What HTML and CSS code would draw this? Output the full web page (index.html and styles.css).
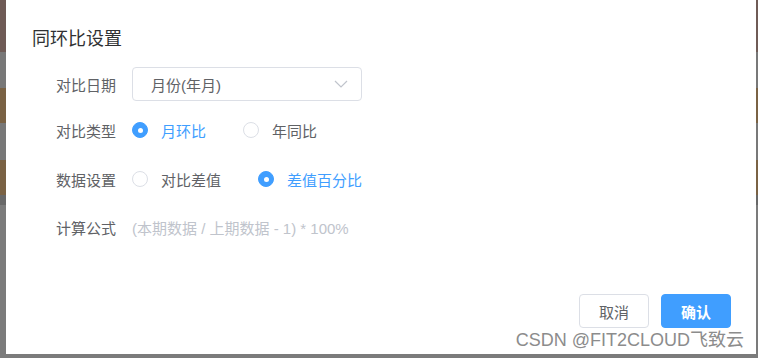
FILE: index.html
```html
<!DOCTYPE html>
<html lang="zh-CN">
<head>
<meta charset="utf-8">
<title>同环比设置</title>
<link rel="stylesheet" href="styles.css">
</head>
<body>
<div class="dialog">
  <div class="title">同环比设置</div>
  <div class="form">
    <div class="row">
      <div class="label">对比日期</div>
      <div class="select">
        <span class="select-text">月份(年月)</span>
        <svg class="arrow" width="14" height="8" viewBox="0 0 14 8"><path d="M1 1 L7 7 L13 1" fill="none" stroke="#c0c4cc" stroke-width="1.2"/></svg>
      </div>
    </div>
    <div class="row row-type">
      <div class="label">对比类型</div>
      <div class="radios">
        <label class="radio checked"><span class="dot"></span><span class="rtext">月环比</span></label>
        <label class="radio"><span class="dot"></span><span class="rtext">年同比</span></label>
      </div>
    </div>
    <div class="row">
      <div class="label">数据设置</div>
      <div class="radios">
        <label class="radio"><span class="dot"></span><span class="rtext">对比差值</span></label>
        <label class="radio checked"><span class="dot"></span><span class="rtext">差值百分比</span></label>
      </div>
    </div>
    <div class="row">
      <div class="label">计算公式</div>
      <div class="formula">(本期数据 / 上期数据 - 1) * 100%</div>
    </div>
  </div>
  <div class="footer">
    <button class="btn">取消</button>
    <button class="btn primary">确认</button>
  </div>
  <div class="watermark">CSDN @FIT2CLOUD飞致云</div>
</div>
</body>
</html>
```

FILE: styles.css
```css
html, body {
  margin: 0;
  padding: 0;
}
body {
  width: 758px;
  height: 358px;
  box-sizing: border-box;
  padding: 0 2px 4px 6px;
  display: flex;
  overflow: hidden;
  font-family: "Liberation Sans", "Noto Sans CJK SC", sans-serif;
  background: linear-gradient(to bottom,
    #6f5b56 0, #6f5b56 52px,
    #787878 52px, #787878 88px,
    #7a6244 88px, #7a6244 123px,
    #787878 123px, #787878 160px,
    #7a6244 160px, #7a6244 195px,
    #686868 195px, #686868 205px,
    #7b7b7b 205px);
}
.dialog {
  position: relative;
  flex: 1;
  background: #fff;
  display: flex;
  flex-direction: column;
  padding: 27px 25px 26px 26px;
}
.title {
  font-size: 18px;
  line-height: 24px;
  color: #303133;
}
.form {
  margin-top: 16px;
  display: flex;
  flex-direction: column;
  gap: 14px;
}
.row {
  display: flex;
  align-items: center;
  height: 34px;
}
.row-type {
  margin-top: -2px;
  margin-bottom: 1px;
}
.label {
  width: 100px;
  padding-right: 16px;
  box-sizing: border-box;
  text-align: right;
  font-size: 15px;
  color: #606266;
}
.select {
  width: 230px;
  height: 34px;
  box-sizing: border-box;
  border: 1px solid #dcdfe6;
  border-radius: 4px;
  display: flex;
  align-items: center;
  justify-content: space-between;
  padding: 0 13px 0 18px;
}
.select-text {
  font-size: 15px;
  color: #606266;
}
.radios {
  display: flex;
  align-items: center;
}
.radio {
  display: flex;
  align-items: center;
  margin-right: 37px;
  font-size: 15px;
  color: #606266;
}
.dot {
  width: 16px;
  height: 16px;
  box-sizing: border-box;
  border: 1px solid #dcdfe6;
  border-radius: 50%;
  background: #fff;
  display: flex;
  align-items: center;
  justify-content: center;
  margin-right: 13px;
}
.radio.checked .dot {
  background: #409eff;
  border-color: #409eff;
}
.radio.checked .dot::after {
  content: "";
  width: 5px;
  height: 5px;
  border-radius: 50%;
  background: #fff;
}
.radio.checked .rtext {
  color: #409eff;
}
.formula {
  font-size: 15px;
  color: #c0c4cc;
}
.footer {
  margin-top: auto;
  display: flex;
  justify-content: flex-end;
  gap: 12px;
}
.btn {
  width: 70px;
  height: 34px;
  border: 1px solid #dcdfe6;
  border-radius: 4px;
  background: #fff;
  color: #606266;
  font-family: inherit;
  font-size: 15px;
  padding: 0;
}
.btn.primary {
  background: #409eff;
  border-color: #409eff;
  color: #fff;
  font-weight: bold;
}
.watermark {
  position: absolute;
  right: 12px;
  bottom: 3px;
  font-size: 18px;
  color: #8c8c8c;
  text-shadow: 0 0 1px #fff, 1px 1px 0 rgba(255,255,255,0.8);
  white-space: nowrap;
}
```
